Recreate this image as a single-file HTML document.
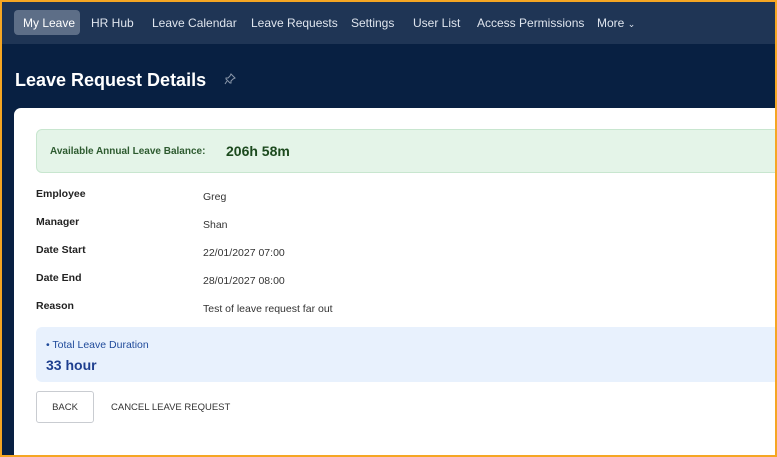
<!DOCTYPE html>
<html><head><style>
*{margin:0;padding:0;box-sizing:border-box}
body{width:777px;height:457px;overflow:hidden;background:#f5a623;font-family:"Liberation Sans",sans-serif;position:relative}
.in{position:absolute;left:2px;top:2px;width:773px;height:453px;background:#082042;overflow:hidden}
.nav{position:absolute;left:0;top:0;width:773px;height:42px;background:#1f3555}
.nav span{position:absolute;top:14px;font-size:12px;color:#dfe5ee;white-space:nowrap}
.pill{position:absolute;left:12px;top:8px;width:66px;height:25px;background:#5d6e87;border-radius:4px}
.abs{position:absolute;white-space:nowrap}
.card{position:absolute;left:12px;top:106px;width:761px;height:347px;background:#fff;border-radius:7px 0 0 0}
.lab{font-size:10.5px;font-weight:bold;color:#222}
.val{font-size:10.5px;color:#333}
</style></head><body><div class="in">
<div class="nav">
<div class="pill"></div>
<span style="left:21px;color:#fff">My Leave</span>
<span style="left:89px">HR Hub</span>
<span style="left:150px">Leave Calendar</span>
<span style="left:249px">Leave Requests</span>
<span style="left:349px">Settings</span>
<span style="left:411px">User List</span>
<span style="left:475px">Access Permissions</span>
<span style="left:595px">More <span style="position:static;font-size:9px">&#8964;</span></span>
</div>
<div class="abs" style="left:13px;top:68px;font-size:18px;font-weight:bold;color:#fff">Leave Request Details</div>
<svg class="abs" style="left:222px;top:71px" width="12" height="12" viewBox="0 0 12 12"><path d="M7 1l4 4-2 1-2 2 0 2-1 0-4-4 0-1 2 0 2-2z M3 8l-2 3" fill="none" stroke="#8a97aa" stroke-width="1"/></svg>
<div class="card"></div>
<div class="abs" style="left:34px;top:127px;width:760px;height:44px;background:#e4f4e8;border:1px solid #c8e6cf;border-radius:6px"></div>
<div class="abs" style="left:48px;top:144px;font-size:10px;font-weight:bold;color:#2d5a2f">Available Annual Leave Balance:</div>
<div class="abs" style="left:224px;top:141px;font-size:14px;font-weight:bold;color:#1c4a1e">206h 58m</div>
<div class="abs lab" style="left:34px;top:186px">Employee</div><div class="abs val" style="left:201px;top:189px">Greg</div>
<div class="abs lab" style="left:34px;top:214px">Manager</div><div class="abs val" style="left:201px;top:217px">Shan</div>
<div class="abs lab" style="left:34px;top:242px">Date Start</div><div class="abs val" style="left:201px;top:245px">22/01/2027 07:00</div>
<div class="abs lab" style="left:34px;top:270px">Date End</div><div class="abs val" style="left:201px;top:273px">28/01/2027 08:00</div>
<div class="abs lab" style="left:34px;top:298px">Reason</div><div class="abs val" style="left:201px;top:301px">Test of leave request far out</div>
<div class="abs" style="left:34px;top:325px;width:760px;height:55px;background:#e8f1fd;border-radius:6px"></div>
<div class="abs" style="left:44px;top:337px;font-size:10.5px;color:#1f4a9a">• Total Leave Duration</div>
<div class="abs" style="left:44px;top:355px;font-size:14px;font-weight:bold;color:#1e3f8f">33 hour</div>
<div class="abs" style="left:34px;top:389px;width:58px;height:32px;border:1px solid #c9ccd1;border-radius:3px;font-size:9.5px;color:#333;display:flex;align-items:center;justify-content:center">BACK</div>
<div class="abs" style="left:109px;top:400px;font-size:9.5px;color:#333">CANCEL LEAVE REQUEST</div>
</div></body></html>
